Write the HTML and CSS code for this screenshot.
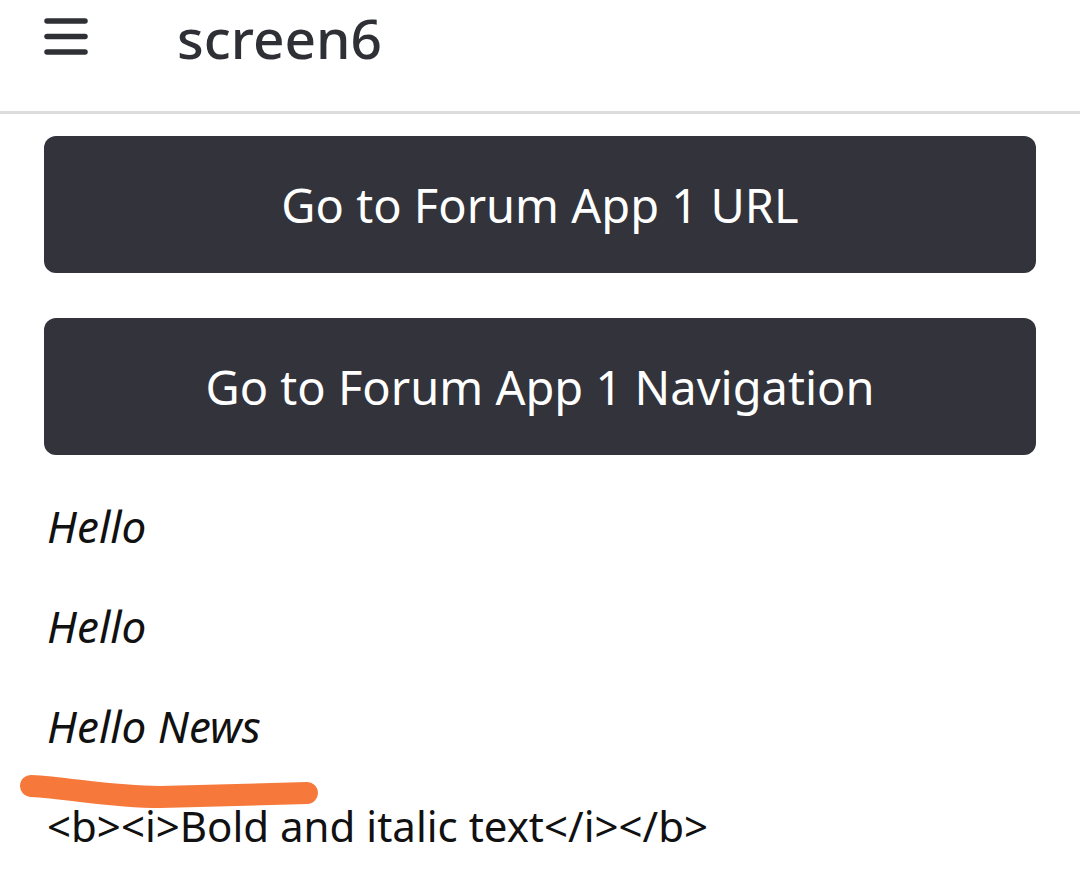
FILE: index.html
```html
<!DOCTYPE html>
<html>
<head>
<meta charset="utf-8">
<link rel="stylesheet" href="styles.css">
</head>
<body>
<header class="topbar">
  <svg class="menu-icon" width="44" height="38" viewBox="0 0 44 38">
    <g stroke="#2f3035" stroke-width="5.5" stroke-linecap="round">
      <line x1="3" y1="3" x2="41" y2="3"/>
      <line x1="3" y1="18.5" x2="41" y2="18.5"/>
      <line x1="3" y1="34" x2="41" y2="34"/>
    </g>
  </svg>
  <h1 class="title">screen6</h1>
</header>
<main class="content">
  <button class="btn">Go to Forum App 1 URL</button>
  <button class="btn">Go to Forum App 1 Navigation</button>
  <div class="lines">
    <p class="line italic">Hello</p>
    <p class="line italic">Hello</p>
    <p class="line italic">Hello News</p>
    <p class="line plain">&lt;b&gt;&lt;i&gt;Bold and italic text&lt;/i&gt;&lt;/b&gt;</p>
  </div>
</main>
<svg class="scribble" width="1080" height="893" viewBox="0 0 1080 893">
  <path d="M31 786 C 70 788, 110 797, 160 797 L 307 793" fill="none" stroke="#f6783a" stroke-width="22" stroke-linecap="round" stroke-linejoin="round"/>
</svg>
</body>
</html>
```
FILE: styles.css
```css
html, body {
  margin: 0;
  padding: 0;
  background: #ffffff;
}
body {
  width: 1080px;
  height: 893px;
  overflow: hidden;
  position: relative;
  font-family: "Noto Sans", "Open Sans", sans-serif;
  color: #111111;
}
.topbar {
  box-sizing: border-box;
  height: 114px;
  border-bottom: 3px solid #dcdcdc;
  display: flex;
  align-items: flex-start;
  padding: 18px 0 0 44px;
}
.menu-icon {
  display: block;
  flex: none;
}
.title {
  margin: -21px 0 0 89px;
  font-size: 55px;
  font-weight: 500;
  color: #2f3035;
  line-height: 1.5;
}
.content {
  padding: 22px 44px 0 44px;
  display: flex;
  flex-direction: column;
}
.btn {
  height: 137px;
  border: none;
  border-radius: 12px;
  background: #32333b;
  color: #ffffff;
  font-family: inherit;
  font-size: 47px;
  margin-bottom: 45px;
  padding: 0;
}
.lines {
  margin-top: -24px;
  padding-left: 3px;
  display: flex;
  flex-direction: column;
}
.line {
  margin: 0;
  height: 100px;
  line-height: 100px;
  white-space: nowrap;
}
.italic {
  font-style: italic;
  font-size: 44px;
}
.plain {
  font-size: 42px;
}
.scribble {
  position: absolute;
  left: 0;
  top: 0;
  pointer-events: none;
}
```
